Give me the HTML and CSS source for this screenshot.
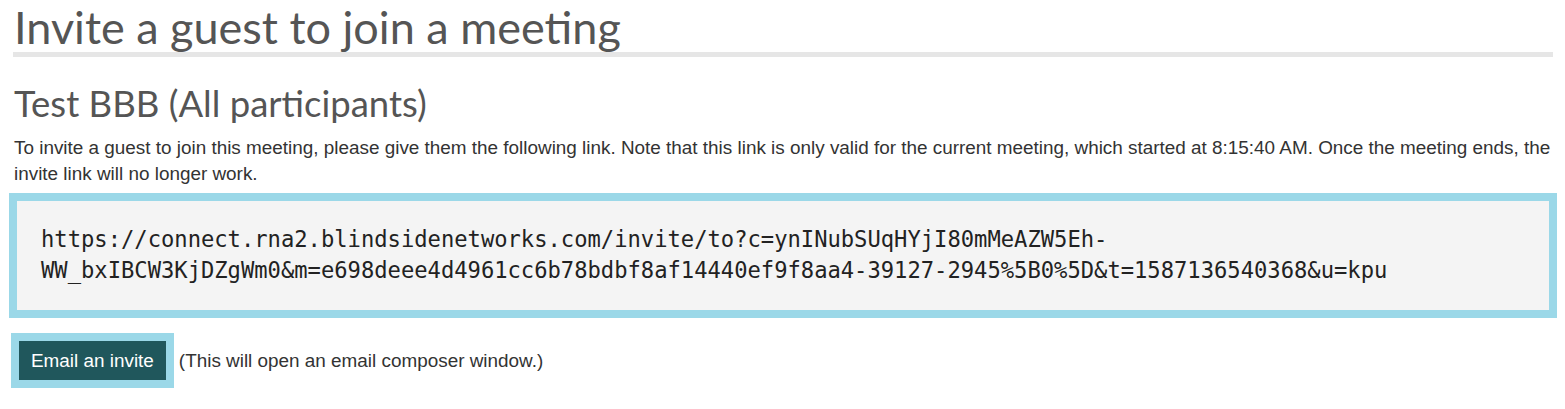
FILE: index.html
```html
<!DOCTYPE html>
<html lang="en">
<head>
<meta charset="utf-8">
<title>Invite a guest to join a meeting</title>
<link rel="stylesheet" href="styles.css">
</head>
<body>
<main class="page">
  <h1 class="page-title">Invite a guest to join a meeting</h1>
  <h2 class="meeting-title">Test BBB (All participants)</h2>
  <p class="intro">To invite a guest to join this meeting, please give them the following link. Note that this link is only valid for the current meeting, which started at 8:15:40 AM. Once the meeting ends, the invite link will no longer work.</p>
  <div class="link-box"><code class="link">https://connect.rna2.blindsidenetworks.com/invite/to?c=ynINubSUqHYjI80mMeAZW5Eh-WW_bxIBCW3KjDZgWm0&amp;m=e698deee4d4961cc6b78bdbf8af14440ef9f8aa4-39127-2945%5B0%5D&amp;t=1587136540368&amp;u=kpu</code></div>
  <div class="actions">
    <span class="btn-ring"><button class="btn" type="button">Email an invite</button></span>
    <span class="hint">(This will open an email composer window.)</span>
  </div>
</main>
</body>
</html>
```

FILE: styles.css
```css
html, body {
  margin: 0;
  padding: 0;
  background: #fff;
}

.page {
  padding: 0 8px 0 9px;
  font-family: "Liberation Sans", Arial, sans-serif;
  color: #333;
}

.page-title {
  margin: 0 4px;
  padding: 2px 0 0 1px;
  font-family: Lato, "Noto Sans", sans-serif;
  font-weight: 400;
  font-size: 45px;
  line-height: 50px;
  color: #555;
  border-bottom: 5px solid #e6e6e6;
}

.meeting-title {
  margin: 26px 0 0 5px;
  font-family: Lato, "Noto Sans", sans-serif;
  font-weight: 400;
  font-size: 36.5px;
  line-height: 40px;
  color: #555;
}

.intro {
  margin: 12px 0 0 5px;
  font-size: 18.9px;
  line-height: 26px;
}

.link-box {
  margin-top: 6px;
  border: 8px solid #9bd8e8;
  background: #f4f4f4;
  padding: 23px 24px 24px 24px;
}

.link {
  display: block;
  font-family: "DejaVu Sans Mono", "Liberation Mono", monospace;
  font-size: 22.15px;
  line-height: 31px;
  color: #222;
  overflow-wrap: anywhere;
}

.actions {
  display: flex;
  align-items: center;
  gap: 5px;
  margin-top: 15px;
  margin-left: 2px;
}

.btn-ring {
  display: inline-flex;
  border: 8px solid #9bd8e8;
}

.btn {
  margin: 0;
  border: 0;
  background: #20575c;
  color: #fff;
  font-family: "Liberation Sans", Arial, sans-serif;
  font-size: 18.9px;
  height: 39px;
  padding: 0 12px;
  cursor: pointer;
}

.hint {
  font-size: 18.9px;
  color: #333;
}
```
